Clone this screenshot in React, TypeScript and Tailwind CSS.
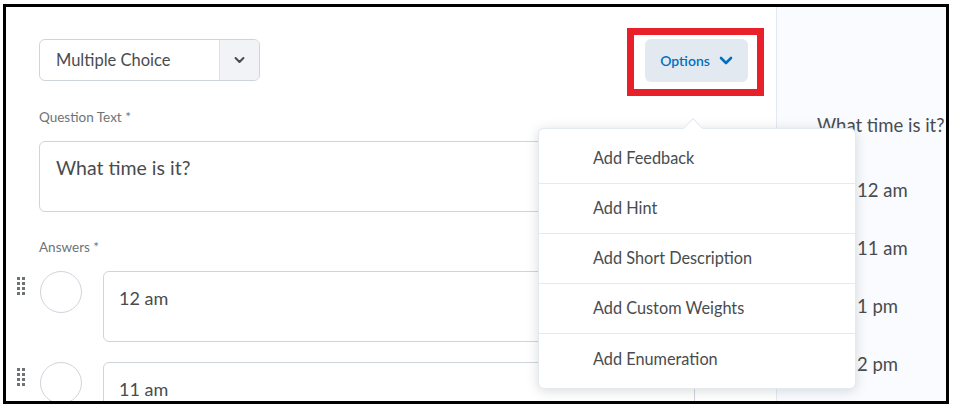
const menuItems = [
  "Add Feedback",
  "Add Hint",
  "Add Short Description",
  "Add Custom Weights",
  "Add Enumeration",
];

const previewAnswers = ["12 am", "11 am", "1 pm", "2 pm"];

function Chevron({ className }: { className?: string }) {
  return (
    <svg viewBox="0 0 14 9" className={className} fill="none" aria-hidden="true">
      <path d="M2 2l5 5 5-5" stroke="currentColor" strokeWidth="2.6" strokeLinecap="round" strokeLinejoin="round" />
    </svg>
  );
}

function DragHandle() {
  return (
    <div className="mt-[6px] grid h-[16px] w-[8px] grid-cols-2 gap-x-[2px] gap-y-[2px]">
      {Array.from({ length: 8 }).map((_, i) => (
        <span key={i} className="h-[3px] w-[3px] bg-[#6e7376]" />
      ))}
    </div>
  );
}

function AnswerRow({ text }: { text: string }) {
  return (
    <div className="-ml-[22px] flex items-start">
      <DragHandle />
      <span className="ml-[15px] h-[42px] w-[42px] shrink-0 rounded-full border border-[#cdd5dc] bg-white" />
      <div className="ml-[21px] h-[71px] w-[592px] rounded-[6px] border border-[#cdd5dc] pl-[15px] pt-[14px] text-[18px] leading-[24px] text-[#494c4e]">
        {text}
      </div>
    </div>
  );
}

export default function App() {
  return (
    <div className="h-[408px] w-[954px] bg-white pl-[3px] pt-[4px] font-['Lato',sans-serif]">
      <div className="relative flex h-[400px] w-[946px] overflow-hidden border-[3px] border-black">
        {/* editor column */}
        <div className="w-[771px] shrink-0 border-r border-[#e3e9f1] bg-white pl-[33px] pr-[28px] pt-[32px]">
          <div className="flex items-start justify-between">
            <div className="flex h-[42px] w-[221px] overflow-hidden rounded-[6px] border border-[#cdd5dc]">
              <div className="flex flex-1 items-center pl-[16px] text-[16.5px] text-[#494c4e]">Multiple Choice</div>
              <div className="flex w-[40px] items-center justify-center border-l border-[#dfe3e8] bg-[#f1f3f6]">
                <Chevron className="h-[8px] w-[11px] text-[#494c4e]" />
              </div>
            </div>
            <div className="relative">
              <span className="absolute -bottom-[14px] -left-[18px] -right-[16px] -top-[11px] border-[7px] border-[#e8202a]" />
              <button className="flex h-[43px] w-[103px] items-center justify-center gap-[9px] rounded-[6px] bg-[#e3e9f1] text-[14px] font-semibold text-[#006fbf]">
                Options
                <Chevron className="h-[9px] w-[14px]" />
              </button>
            </div>
          </div>

          <div className="mt-[26px] h-[18px] text-[13.5px] leading-[18px] text-[#6e7376]">Question Text *</div>
          <div className="mt-[15px] h-[71px] w-full rounded-[6px] border border-[#cdd5dc] pl-[16px] pt-[13px] text-[19.5px] leading-[26px] text-[#494c4e]">
            What time is it?
          </div>

          <div className="mt-[26px] h-[18px] text-[13.5px] leading-[18px] text-[#6e7376]">Answers *</div>
          <div className="mt-[15px] flex flex-col gap-[20px]">
            <AnswerRow text="12 am" />
            <AnswerRow text="11 am" />
          </div>
        </div>

        {/* preview column */}
        <div className="min-w-0 flex-1 bg-[#f9fbff] pl-[40px] pt-[106px] text-[#494c4e]">
          <div className="whitespace-nowrap text-[18.5px] leading-[24px]">What time is it?</div>
          <div className="mt-[43px] flex flex-col gap-[36px]">
            {previewAnswers.map((a) => (
              <div key={a} className="flex h-[22px] items-center gap-[12px] whitespace-nowrap text-[18.5px]">
                <span className="h-[28px] w-[28px] shrink-0 rounded-full border border-[#cdd5dc] bg-white" />
                {a}
              </div>
            ))}
          </div>
        </div>

        {/* options dropdown */}
        <div className="absolute left-[532px] top-[121px] h-[261px] w-[318px] rounded-[6px] border border-[#e3e9f1] bg-white pt-[5px] shadow-[0_2px_12px_rgba(86,90,92,0.22)]">
          <span className="absolute -top-[8px] left-[147px] h-[14px] w-[14px] rotate-45 border-l border-t border-[#e3e9f1] bg-white" />
          {menuItems.map((item, i) => (
            <div
              key={item}
              className={`relative flex h-[50px] items-center pl-[54px] text-[16.3px] text-[#494c4e] ${
                i < menuItems.length - 1 ? "border-b border-[#e3e9f1]" : ""
              }`}
            >
              {item}
            </div>
          ))}
        </div>
      </div>
    </div>
  );
}
